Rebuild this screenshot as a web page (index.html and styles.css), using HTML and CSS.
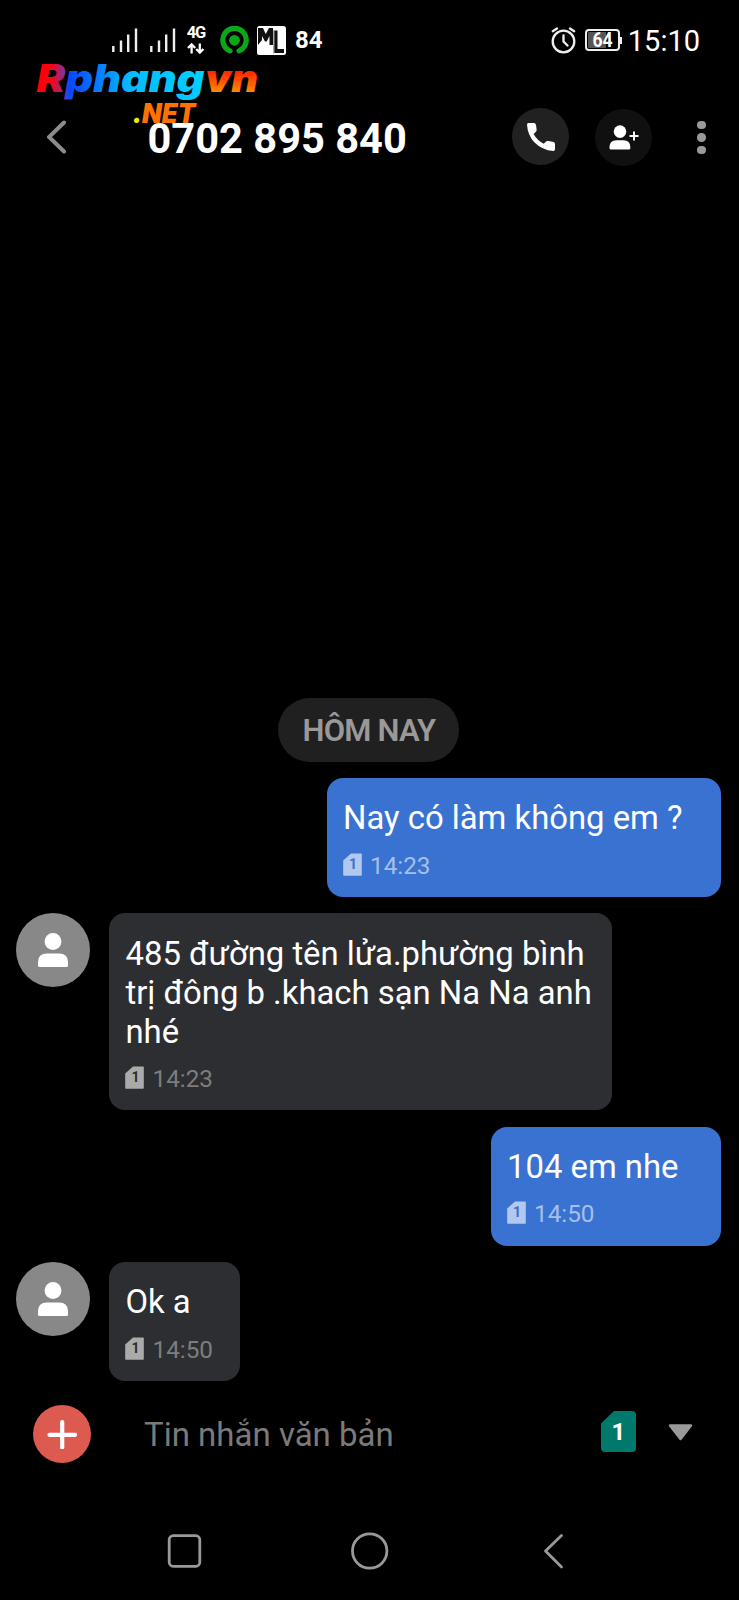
FILE: index.html
```html
<!DOCTYPE html>
<html lang="vi">
<head>
<meta charset="utf-8">
<title>0702 895 840</title>
<link rel="stylesheet" href="styles.css">
</head>
<body>
<svg class="defs" width="0" height="0">
  <symbol id="sim" viewBox="0 0 19 23"><path d="M8 .5H18Q18.8.5 18.8 1.3V22Q18.8 22.8 18 22.8H1Q.2 22.8 .2 22V7.6Z" fill="currentColor"/></symbol>
  <symbol id="person" viewBox="0 0 30 34"><circle cx="15" cy="8.5" r="8.4"/><path d="M0 32.5V29Q0 20.5 9 20.5H21Q30 20.5 30 29V32.5Q30 34 28.5 34H1.5Q0 34 0 32.5Z"/></symbol>
  <symbol id="signal" viewBox="0 0 26 24"><path d="M1.3 18V24M9 12.5V24M16.2 6.5V24M24 .5V24" stroke="#eee" stroke-width="2.4"/></symbol>
</svg>
<div class="screen">
  <div class="status">
    <svg class="signal" width="26" height="24"><use href="#signal"/></svg>
    <svg class="signal second" width="26" height="24"><use href="#signal"/></svg>
    <div class="network"><span>4G</span>
      <svg width="18" height="11" viewBox="0 0 18 11" fill="none" stroke="#fff" stroke-width="2.3"><path d="M4.6 10.5V1.5M1 5L4.6 1.4 8.2 5M12.8 .5V9.5M9.2 6L12.8 9.6 16.4 6"/></svg>
    </div>
    <svg class="ring" width="29" height="29" viewBox="0 0 29 29"><path d="M10 24.8A11.7 11.7 0 1 1 19 24.8" fill="none" stroke="#0aa818" stroke-width="5.2" stroke-linecap="round"/><circle cx="14.5" cy="14.3" r="5.4" fill="#0aa818"/></svg>
    <svg class="ml" width="29" height="29" viewBox="0 0 29 29"><rect width="29" height="29" rx="2.5" fill="#fff"/><path d="M1 2H6L8.7 8 12 2H16V19H12.5V10L9.7 15.5H8L5 10V14L1 19Z" fill="#111"/><path d="M17.3 4.500H20.500V23H27V27H17.300Z" fill="#111"/><path d="M16.500 4V27.500" stroke="#aaa" stroke-width="1"/></svg>
    <span class="count">84</span>
    <svg class="alarm" width="25" height="27" viewBox="0 0 25 27" fill="none" stroke="#eee" stroke-width="2.300" stroke-linecap="round"><circle cx="12.500" cy="14.500" r="10.800"/><path d="M12.500 8.500V14.500L16.500 18.500M1.800 4.200L6 1.500M19 1.500L23.200 4.200"/></svg>
    <div class="battery"><span>64</span></div>
    <span class="clock">15:10</span>
  </div>
  <div class="header">
    <svg class="back" width="20" height="34" viewBox="0 0 20 34"><path d="M17 2.500L2 17 17 31.500" fill="none" stroke="#8c8c8c" stroke-width="4" stroke-linecap="round"/></svg>
    <h1 class="number">0702 895 840</h1>
    <div class="round call"><svg width="28" height="28" viewBox="0 0 84 84" fill="#fff"><path d="M4 0H22Q26 1 27 6L29 20Q29 24 26 27L20 33Q30 52 50 62L58 55Q61 53 65 54L80 57Q84 59 84 63V79Q84 84 79 84Q45 82 22 58Q2 36 0 5Q0 0 4 0Z"/></svg></div>
    <div class="round add"><svg width="30" height="25" viewBox="0 0 30 25" fill="#fff"><circle cx="11" cy="6.600" r="6.300"/><path d="M.5 23V22Q.5 15.200 7.500 15.200H14.500Q21.300 15.200 21.300 22V23Q21.300 24.500 20 24.500H2Q.5 24.500 .5 23Z"/><path d="M20.500 11H29.500M25 6.500V15.500" stroke="#fff" stroke-width="2"/></svg></div>
    <div class="menu"><i></i><i></i><i></i></div>
  </div>
  <svg class="brand" width="230" height="76" viewBox="0 0 230 76">
    <defs>
      <linearGradient id="cool" gradientUnits="userSpaceOnUse" x1="6" y1="0" x2="190" y2="0"><stop offset="0" stop-color="#f00"/><stop offset=".08" stop-color="#f00818"/><stop offset=".14" stop-color="#8030a0"/><stop offset=".17" stop-color="#0648ff"/><stop offset=".32" stop-color="#0878ff"/><stop offset=".5" stop-color="#05bcff"/><stop offset="1" stop-color="#00d4ff"/></linearGradient>
      <linearGradient id="warm" x1="0" y1="0" x2="0" y2="1"><stop offset=".3" stop-color="#ff1800"/><stop offset=".8" stop-color="#ff8a00"/></linearGradient>
    </defs>
    <text class="brand-word" x="4.500" y="33" textLength="168" lengthAdjust="spacingAndGlyphs" fill="url(#cool)">Rphang</text>
    <text class="brand-word" x="173" y="33" textLength="53" lengthAdjust="spacingAndGlyphs" fill="url(#warm)">vn</text>
    <text class="brand-net" x="100.500" y="63.500" textLength="63" lengthAdjust="spacingAndGlyphs" fill="#ff7200"><tspan fill="#f5e800">.</tspan>NET</text>
  </svg>
  <div class="thread">
    <div class="day">HÔM NAY</div>
    <div class="row out"><div class="bubble first"><p>Nay có làm không em ?</p><div class="meta"><span class="chip"><svg width="19" height="23"><use href="#sim"/></svg><b>1</b></span><time>14:23</time></div></div></div>
    <div class="row"><div class="avatar"><svg width="30" height="34"><use href="#person"/></svg></div><div class="bubble long"><p>485 đường tên lửa.phường bình<br>trị đông b .khach sạn Na Na anh<br>nhé</p><div class="meta"><span class="chip"><svg width="19" height="23"><use href="#sim"/></svg><b>1</b></span><time>14:23</time></div></div></div>
    <div class="row out"><div class="bubble third"><p>104 em nhe</p><div class="meta"><span class="chip"><svg width="19" height="23"><use href="#sim"/></svg><b>1</b></span><time>14:50</time></div></div></div>
    <div class="row"><div class="avatar"><svg width="30" height="34"><use href="#person"/></svg></div><div class="bubble last"><p>Ok a</p><div class="meta"><span class="chip"><svg width="19" height="23"><use href="#sim"/></svg><b>1</b></span><time>14:50</time></div></div></div>
  </div>
  <div class="composer">
    <div class="plus"><svg width="30" height="30" viewBox="0 0 30 30"><path d="M15.200 3V28.500M2.500 15.800H28" stroke="#fff" stroke-width="4.200" stroke-linecap="round"/></svg></div>
    <span class="hint">Tin nhắn văn bản</span>
    <div class="sim-pick"><svg width="35" height="41" viewBox="0 0 35 41"><path d="M13 0H31Q35 0 35 4V37Q35 41 31 41H4Q0 41 0 37V12.500Z" fill="#00796b"/></svg><b>1</b></div>
    <svg class="arrow" width="25" height="17" viewBox="0 0 25 17"><path d="M2 1.500H23L12.500 15Z" fill="#999" stroke="#999" stroke-width="2.500" stroke-linejoin="round"/></svg>
  </div>
  <div class="nav">
    <svg width="38" height="38" viewBox="0 0 38 38"><rect x="3.200" y="3.700" width="30.600" height="30.600" rx="4" fill="none" stroke="#999" stroke-width="2.800"/></svg>
    <svg width="38" height="38" viewBox="0 0 38 38"><circle cx="18.700" cy="19" r="17.200" fill="none" stroke="#999" stroke-width="2.800"/></svg>
    <svg width="38" height="38" viewBox="0 0 38 38"><path d="M26.500 3.500L10.500 19 26.500 35" fill="none" stroke="#999" stroke-width="2.800" stroke-linecap="round" stroke-linejoin="round"/></svg>
  </div>
</div>
</body>
</html>
```
FILE: styles.css
```css
* { box-sizing: border-box; }
body { margin: 0; background: #000; font-family: Roboto, "Noto Sans", sans-serif; color: #fff; }
p, h1 { margin: 0; }
svg { display: block; flex: none; }
.defs { position: absolute; }
.screen { position: relative; width: 739px; height: 1600px; display: flex; flex-direction: column; overflow: hidden; }

.status { height: 80px; display: flex; align-items: center; padding: 0 39px 0 112px; flex: none; }
.second { margin-left: 12px; }
.network { margin-left: 10px; width: 20px; display: flex; flex-direction: column; align-items: center; gap: 4px; }
.network span { font-size: 16.500px; line-height: 12px; font-weight: 700; letter-spacing: -1px; }
.ring { margin-left: 14px; }
.ml { margin-left: 8px; }
.count { margin-left: 9px; font-size: 24px; font-weight: 700; line-height: 28px; }
.alarm { margin-left: auto; }
.battery { position: relative; margin-left: 9px; width: 35px; height: 22px; border: 2px solid #eee; border-radius: 4px; background: linear-gradient(90deg, #555 62%, #000 62%); background-clip: content-box; padding: 1px; display: flex; align-items: center; justify-content: center; }
.battery::after { content: ""; position: absolute; right: -4px; top: 6px; width: 2px; height: 7px; background: #eee; }
.battery span { font-size: 20px; font-weight: 700; line-height: 18px; transform: scaleX(.88); }
.clock { margin-left: 8px; font-size: 29px; line-height: 34px; padding-top: 2px; }

.header { height: 113px; display: flex; align-items: center; padding-left: 47px; flex: none; }
.number { width: 260px; margin-left: 80.500px; padding-top: 3px; font-size: 41.600px; font-weight: 700; line-height: 47px; white-space: nowrap; }
.round { width: 57px; height: 57px; border-radius: 50%; display: flex; align-items: center; justify-content: center; }
.call { margin-left: 104.500px; background: #212121; }
.add { margin-left: 26px; margin-top: 2px; background: #101010; }
.menu { margin: 2px 0 0 45px; display: flex; flex-direction: column; gap: 4px; }
.menu i { width: 8.500px; height: 8.500px; border-radius: 50%; background: #999; }

.brand { position: absolute; left: 32px; top: 59px; overflow: visible; }
.brand-word { font: italic 900 38.500px Inter, Roboto, sans-serif; }
.brand-net { font: italic 900 26.500px Inter, Roboto, sans-serif; }

.thread { height: 1188px; flex: none; display: flex; flex-direction: column; justify-content: flex-end; gap: 16.300px; padding: 0 18.500px 0 16.300px; }
.day { align-self: center; margin-left: 1px; width: 181px; height: 64px; border-radius: 32px; background: #202020; color: #999; font-size: 31px; font-weight: 600; line-height: 66px; text-align: center; letter-spacing: -.8px; }
.row { display: flex; }
.out { justify-content: flex-end; }
.avatar { width: 74px; height: 74px; margin-right: 18.700px; border-radius: 50%; background: #888; fill: #fff; display: flex; align-items: center; justify-content: center; }
.bubble { border-radius: 16px; background: #2d2e32; padding: 21.200px 0 19.500px 16.500px; }
.bubble p { font-size: 32.850px; line-height: 39.100px; white-space: nowrap; }
.out .bubble { background: #3972d1; }
.first { width: 394px; }
.long { width: 503px; }
.third { width: 230px; }
.last { width: 131px; }
.meta { height: 24px; margin-top: 15.200px; display: flex; align-items: center; color: #7d7d7d; }
.meta time { margin-left: 8px; font-size: 24.300px; line-height: 24px; }
.chip { position: relative; margin-bottom: 3px; color: #aaa; }
.chip b { position: absolute; inset: 4px 0 0 1px; text-align: center; font-size: 14px; line-height: 15px; color: #2d2e32; }
.out .meta { color: #a6bee9; }
.out .chip { color: #b2c8ee; }
.out .chip b { color: #3972d1; }

.composer { height: 106px; display: flex; align-items: center; padding: 0 46px 0 32.500px; flex: none; }
.plus { width: 58px; height: 58px; border-radius: 50%; background: #dd5a50; display: flex; align-items: center; justify-content: center; }
.hint { margin-left: 53.500px; padding-top: 2px; color: #7a7a7a; font-size: 33px; line-height: 40px; white-space: nowrap; }
.sim-pick { position: relative; margin: 0 0 6px auto; }
.sim-pick b { position: absolute; inset: 0; text-align: center; font-size: 24px; line-height: 43px; }
.arrow { margin: 0 0 4px 32px; }
.nav { height: 113px; display: flex; justify-content: space-between; align-items: center; padding: 14px 166px 0 166px; flex: none; }
```
